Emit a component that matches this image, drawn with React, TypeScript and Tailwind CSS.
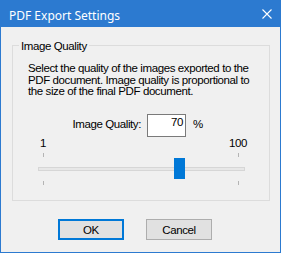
import React from "react";

export default function App() {
  const ui = { fontFamily: '"Liberation Sans", Arial, sans-serif' };
  return (
    <div className="w-[281px] h-[253px] bg-[#2c7ad0] flex flex-col px-[1px] pb-[1px]">
      <div className="h-[27px] flex items-start justify-between">
        <span
          className="pt-[8px] pl-[8px] text-[12px] leading-[16px] text-white"
          style={{ fontFamily: '"Noto Sans", "Open Sans", sans-serif' }}
        >
          PDF Export Settings
        </span>
        <svg className="mt-[9px] mr-[8px]" width="10" height="10" viewBox="0 0 10 10">
          <path d="M0.5 0.5 L9.5 9.5 M9.5 0.5 L0.5 9.5" stroke="#ffffff" strokeWidth="1.1" fill="none" />
        </svg>
      </div>
      <div
        className="flex-1 bg-[#f0f0f0] flex flex-col pl-[11px] pt-[18px] text-[11.5px] tracking-[-0.4px] text-black"
        style={ui}
      >
        <div className="w-[258px] h-[156px] border border-[#dcdcdc] flex flex-col">
          <span className="self-start -mt-[6px] ml-[6px] px-[2px] bg-[#f0f0f0] leading-[12px]">
            Image Quality
          </span>
          <div className="mt-[11px] ml-[15px] h-[35px] leading-[11.5px] whitespace-nowrap">
            Select the quality of the images exported to the
            <br />
            PDF document. Image quality is proportional to
            <br />
            the size of the final PDF document.
          </div>
          <div className="mt-[16px] flex items-start">
            <span className="w-[134px] text-right pr-[6px] mt-[4px] leading-[12px]">Image Quality:</span>
            <div className="w-[39px] h-[23px] border border-[#7a7a7a] bg-white text-right pr-[2px] pt-[1px] leading-[12px]">
              70
            </div>
            <span className="ml-[7px] mt-[4px] leading-[12px]">%</span>
          </div>
          <div className="ml-[24px] w-[213px] flex justify-between leading-[12px]">
            <span className="w-[12px] text-center">1</span>
            <span className="w-[24px] text-center">100</span>
          </div>
          <div className="relative mt-[4px] ml-[25px] w-[207px] flex flex-col">
            <div className="h-[4px] flex justify-between pl-[5px] pr-[6px]">
              <div className="w-[1px] h-[4px] bg-[#b4b4b4]" />
              <div className="w-[1px] h-[4px] bg-[#b4b4b4]" />
            </div>
            <div className="mt-[10px] h-[4px] border border-[#d6d6d6] bg-[#e7e7e7]" />
            <div className="mt-[10px] h-[4px] flex justify-between pl-[5px] pr-[6px]">
              <div className="w-[1px] h-[4px] bg-[#b4b4b4]" />
              <div className="w-[1px] h-[4px] bg-[#b4b4b4]" />
            </div>
            <div className="absolute left-[136px] top-[5px] w-[11px] h-[21px] bg-[#0078d7]" />
          </div>
        </div>
        <div className="mt-[18px] ml-[46px] flex gap-[22px]">
          <button className="w-[66px] h-[21px] border-2 border-[#0078d7] bg-[#e1e1e1] flex items-center justify-center leading-[12px]">
            OK
          </button>
          <button className="w-[66px] h-[21px] border border-[#adadad] bg-[#e1e1e1] flex items-center justify-center leading-[12px]">
            Cancel
          </button>
        </div>
      </div>
    </div>
  );
}
